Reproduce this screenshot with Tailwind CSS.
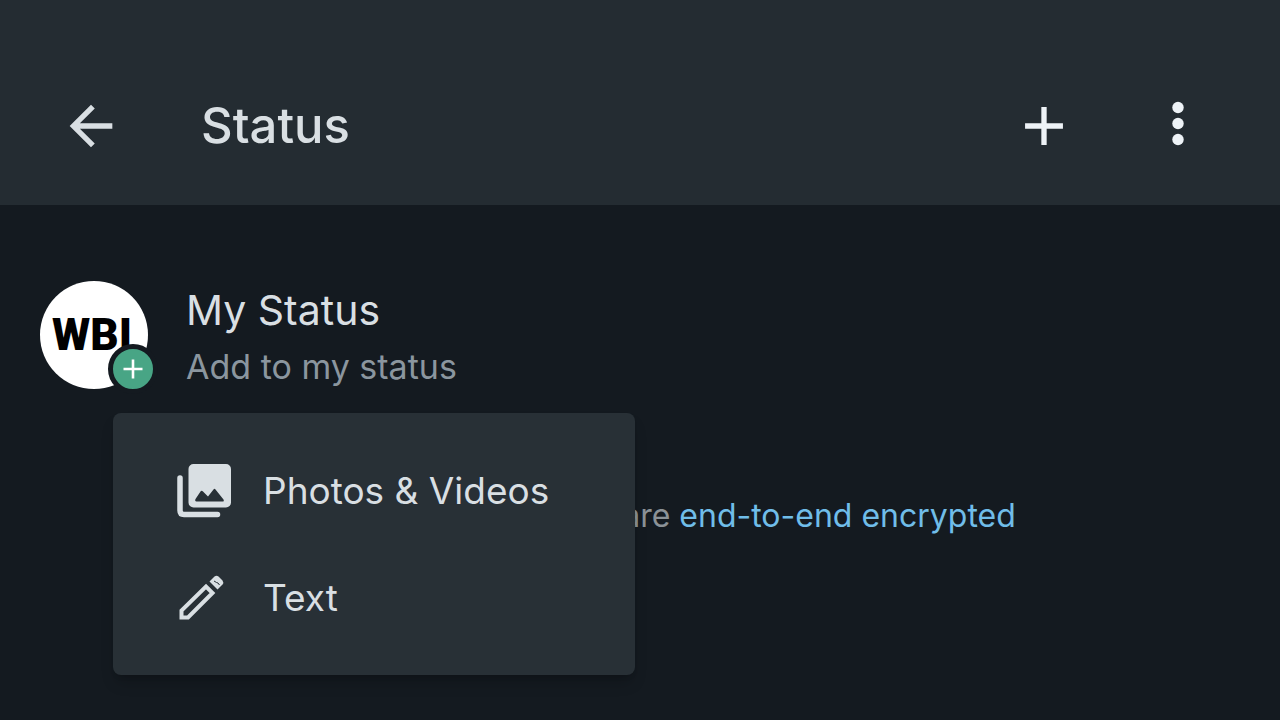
<!DOCTYPE html>
<html lang="en">
<head>
  <meta charset="UTF-8" />
  <meta name="viewport" content="width=device-width, initial-scale=1.0" />
  <title>Status</title>
  <script src="https://cdn.jsdelivr.net/npm/@tailwindcss/browser@4"></script>
</head>
<body class="bg-[#141a20] text-[#d9dfe3] font-['Inter',sans-serif] min-h-screen flex flex-col overflow-hidden">

  <header class="bg-[#242c32] flex items-center pt-[94px] pb-[47px] pl-[59px] pr-[70px]">
    <button type="button" aria-label="Back" class="size-16">
      <svg viewBox="0 0 24 24" class="size-16" fill="currentColor"><path d="M20 11H7.83l5.59-5.59L12 4l-8 8 8 8 1.41-1.41L7.83 13H20v-2z" /></svg>
    </button>
    <h1 class="ml-[78px] flex-1 text-[49px] leading-16 font-medium">Status</h1>
    <div class="flex gap-[70px] text-[#eef3f7]">
      <button type="button" aria-label="Add status" class="size-16">
        <svg viewBox="0 0 24 24" class="size-16" fill="currentColor"><path d="M19.1 13H13v6.1h-2V13H4.900v-2H11V4.900h2V11h6.100z" /></svg>
      </button>
      <button type="button" aria-label="More options" class="size-16">
        <svg viewBox="0 0 64 64" class="size-16" fill="currentColor">
          <circle cx="32" cy="13.500" r="5.700" />
          <circle cx="32" cy="29.500" r="5.700" />
          <circle cx="32" cy="45.500" r="5.700" />
        </svg>
      </button>
    </div>
  </header>

  <main class="relative flex-1 pt-[76px]">
    <section class="flex items-start pl-10">
      <div class="relative size-[108px]">
        <div class="size-[108px] rounded-full bg-white overflow-hidden flex items-center pl-3">
          <span class="font-['Roboto',sans-serif] font-black text-[44px] leading-none text-black">WBI</span>
        </div>
        <!-- add badge -->
        <span class="absolute -right-[10px] -bottom-[5px] size-[50px] rounded-full border-5 border-[#141a20] bg-[#48a585]">
          <svg viewBox="0 0 40 40" class="size-10" fill="none" stroke="#fff" stroke-width="2.600"><path d="M20 10.500v19M10.500 20h19" /></svg>
        </span>
      </div>
      <div class="ml-[38px]">
        <h2 class="text-[41px] leading-[58px]">My Status</h2>
        <p class="text-[34px] leading-[56px] text-[#8b969f]">Add to my status</p>
      </div>
    </section>

    <p class="mt-[97px] flex items-center justify-center text-[32px] leading-12 text-[#8b9297]">
      <svg viewBox="0 0 24 24" class="size-8 mr-4" fill="currentColor"><path d="M18 8h-1V6A5 5 0 0 0 7 6v2H6a2 2 0 0 0-2 2v10a2 2 0 0 0 2 2h12a2 2 0 0 0 2-2V10a2 2 0 0 0-2-2zM9 6a3 3 0 0 1 6 0v2H9z" /></svg>
      <span>Your status updates are <a href="#" class="text-[#70bde9]">end-to-end encrypted</a></span>
    </p>

    <!-- popup menu -->
    <div role="menu" class="absolute left-[113px] top-[208px] w-[522px] rounded-lg bg-[#283036] shadow-lg shadow-black/20 py-6">
      <button type="button" role="menuitem" class="flex w-full items-center pl-[62px] h-[107px] text-left text-[37px]">
        <svg viewBox="0 0 60 60" class="size-15 mr-7" fill="none">
          <path fill="currentColor" d="M18.500 3h32.500a5 5 0 0 1 5 5v33.500a5 5 0 0 1-5 5h-32.500a5 5 0 0 1-5-5V8a5 5 0 0 1 5-5z" />
          <path fill="#283036" d="M21.500 40.500h26q2 0 1-2L40.500 28.500q-1-1.500-2 0L33 35.500l-5-5q-1.500-1.500-2.500 0L20.500 38q-1 2 1 2.500z" />
          <path stroke="currentColor" stroke-width="5.500" stroke-linecap="round" d="M5 17v32.500q0 4 4 4h33.500" />
        </svg>
        Photos &amp; Videos
      </button>
      <button type="button" role="menuitem" class="flex w-full items-center pl-[62px] h-[107px] text-left text-[37px]">
        <svg viewBox="0 0 60 60" class="size-15 mr-7" fill="none">
          <path stroke="currentColor" stroke-width="4" d="M6.500 49.500v-7L31 18.500l6.500 6.500L13 49.500z" />
          <path fill="currentColor" d="M34.500 13.500l5-5q2-1.500 4 0l4 4q1.500 2 0 4l-5 5z" />
          <path stroke="#283036" stroke-width="1" d="M39 13l2.500 1.500 1.500.5 1.500 2" />
        </svg>
        Text
      </button>
    </div>
  </main>

</body>
</html>
